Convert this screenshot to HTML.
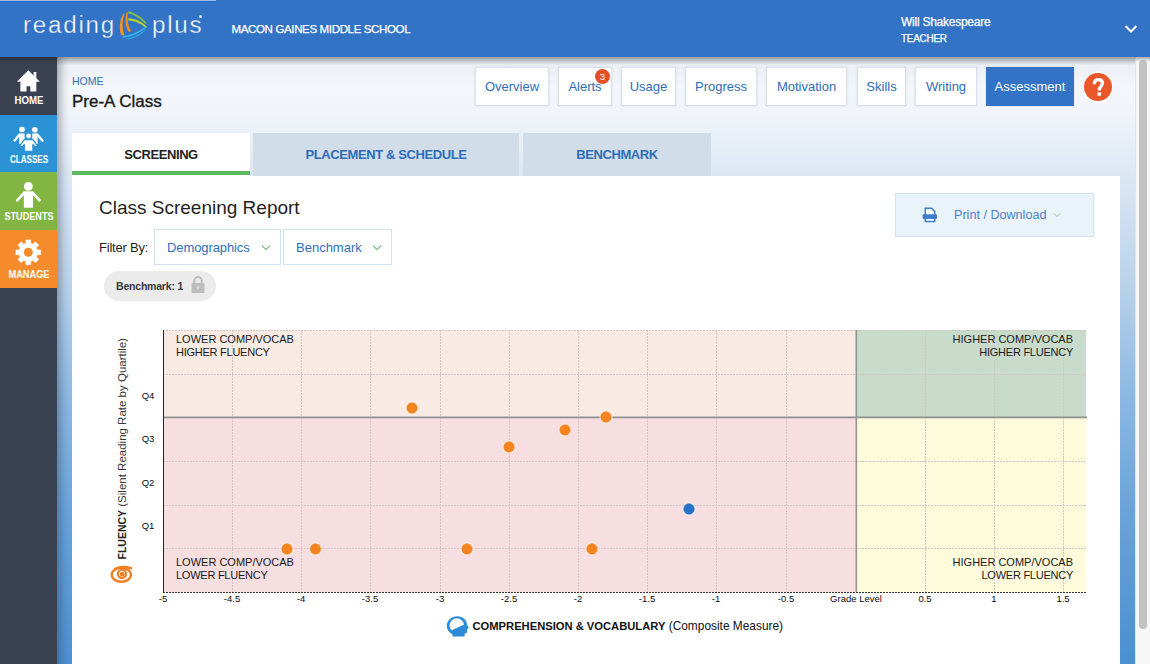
<!DOCTYPE html>
<html><head><meta charset="utf-8">
<style>
*{box-sizing:border-box;margin:0;padding:0}
html,body{width:1150px;height:664px;overflow:hidden;font-family:"Liberation Sans",sans-serif}
body{position:relative;background:#e9eef4}
.abs{position:absolute}
#bg{left:57px;top:57px;width:1093px;height:607px;background:linear-gradient(180deg,#e9edf2 0%,#f3f6fa 5%,#f1f5fa 9%,#dce7f3 19.6%,#bfd5ec 35%,#8cb8e2 56%,#6aa3d9 75%,#4a90d2 100%)}
#lshadow{left:57px;top:57px;width:12px;height:607px;background:linear-gradient(90deg,rgba(40,50,70,.33),rgba(40,50,70,.08) 60%,rgba(40,50,70,0))}
#hdr{left:0;top:0;width:1150px;height:57px;background:#3273c5}
#hdrline{left:0;top:0;width:216px;height:1px;background:#a3bde3}
#shadow{left:57px;top:57px;width:1093px;height:8px;background:linear-gradient(180deg,rgba(60,60,70,.45),rgba(60,60,70,0))}
#side{left:0;top:57px;width:57px;height:607px;background:#3a4251}
.nav{position:absolute;left:0;width:57px;height:58px;color:#fff;font-size:9.5px;text-align:center}
.nav span{position:absolute;left:0;width:57px;text-align:center}
.wt{color:#fff;white-space:nowrap}
.btn{position:absolute;top:67px;height:39px;background:#fff;border:1px solid #d9e2ec;color:#2f6db8;font-size:13px;text-align:center;line-height:37px;box-shadow:0 0 2px rgba(150,170,200,.3)}
.tab{position:absolute;top:133px;height:43px;background:#d1dde8;color:#2f6db8;font-size:13px;letter-spacing:-0.4px;font-weight:bold;text-align:center;line-height:44px}
#panel{left:72px;top:176px;width:1048px;height:488px;background:#fff}
.t{position:absolute;white-space:nowrap}
.sl{font-size:10.5px;font-weight:bold;line-height:12px;transform:translateX(-50%) scaleX(var(--sx,1));}
</style></head>
<body>
<div id="bg" class="abs"></div>
<div id="hdr" class="abs"></div>
<div id="hdrline" class="abs"></div>
<div class="abs" style="left:0;top:1px;width:216px;height:1px;background:#1e6acb"></div>
<!-- logo -->
<div class="t wt" style="left:22.5px;top:12px;font-size:22px;letter-spacing:1.6px;-webkit-text-stroke:0.35px #3273c5;transform:scale(1.1,1.05);transform-origin:0 0">reading</div>
<svg class="abs" style="left:110px;top:5px" width="50" height="40" viewBox="110 5 50 40">
  <path d="M123.4 13.5 C119.8 19 118.8 28 121 34.5 C122 36 124.5 35.8 124.3 34.2 C121.8 28 122.3 20 124.4 14 Z" fill="#f7931e"/>
  <path d="M126.6 12 C124.8 19 125 26 128.5 31.5 C129.5 32.5 131.5 31.5 130.8 30.3 C127.8 25.5 127.2 19 127.8 12.5 Z" fill="#f28a1c"/>
  <path d="M128.3 11.2 C135.5 12.5 142.5 17.5 146.8 23.5 L145 23.8 C140.5 18.5 134.5 14.5 128.3 13.4 Z" fill="#7cc242"/>
  <path d="M128.3 18.2 C135.5 18.3 143 22 147.3 27.3 L145.5 27.6 C141 23.5 135 20.6 128.3 20.4 Z" fill="#b9d530"/>
  <path d="M122.5 36.2 C131 35.5 140.5 31 146 26.2 L146.4 27.6 C141 32.5 131.5 37 123.2 37.8 Z" fill="#3bb5ea"/>
  <path d="M126.5 38.5 C134 37.6 141 33.5 145.3 29 L145.6 30.2 C141.5 34.8 134.5 38.8 127.2 39.6 Z" fill="#2fa6e0"/>
</svg>
<div class="t wt" style="left:151.5px;top:12px;font-size:22px;letter-spacing:1.6px;-webkit-text-stroke:0.35px #3273c5;transform:scale(1.1,1.05);transform-origin:0 0">plus</div>
<div class="abs" style="left:199px;top:15px;width:3px;height:3px;border-radius:50%;background:#fff;opacity:.8"></div>
<div class="t wt" style="left:231.5px;top:23.2px;font-size:11.5px;letter-spacing:-0.35px;-webkit-text-stroke:0.25px #fff">MACON GAINES MIDDLE SCHOOL</div>
<div class="t wt" style="left:901px;top:14.5px;font-size:12px;letter-spacing:-0.25px;-webkit-text-stroke:0.25px #fff">Will Shakespeare</div>
<div class="t wt" style="left:901px;top:32.5px;font-size:10px;letter-spacing:-0.3px;-webkit-text-stroke:0.25px #fff">TEACHER</div>
<svg class="abs" style="left:1124px;top:24px" width="14" height="10" viewBox="0 0 14 10"><path d="M1.5 2 L7 7.5 L12.5 2" stroke="#fff" stroke-width="2" fill="none"/></svg>

<div id="side" class="abs"></div>
<div id="shadow" class="abs"></div>
<div id="lshadow" class="abs"></div>

<!-- sidebar items -->
<div class="abs" style="left:0;top:115px;width:57px;height:57px;background:#2b93d5"></div>
<div class="abs" style="left:0;top:172px;width:57px;height:58px;background:#82b541"></div>
<div class="abs" style="left:0;top:230px;width:57px;height:58px;background:#f58b2b"></div>
<div class="abs" style="left:0;top:57px;width:57px;height:5px;background:linear-gradient(180deg,rgba(20,25,35,.45),rgba(20,25,35,0))"></div>
<svg class="abs" style="left:0;top:0" width="57" height="300" viewBox="0 0 57 300">
  <path d="M28.3 70.3 L39.9 81.8 L36.3 81.8 L36.3 91.6 L30.3 91.6 L30.3 86.2 L26.5 86.2 L26.5 91.6 L20.4 91.6 L20.4 81.8 L16.9 81.8 Z" fill="#fff"/>
  <rect x="33.6" y="72" width="2.7" height="7" fill="#fff"/>
  <g fill="#fff" stroke="#fff" stroke-linecap="round">
    <circle cx="22" cy="129.5" r="2.8" stroke="none"/>
    <circle cx="34.8" cy="129.7" r="2.8" stroke="none"/>
    <path d="M19.3 133.5 L24.6 133.5 L24.6 144 L19.3 144 Z" stroke="none"/>
    <path d="M32.2 133.5 L37.6 133.5 L37.6 144 L32.2 144 Z" stroke="none"/>
    <path d="M19.6 134.5 L14.6 140.6" stroke-width="2.3" fill="none"/>
    <path d="M37.3 134.5 L42.5 140.8" stroke-width="2.3" fill="none"/>
  </g>
  <g stroke="#2b93d5" stroke-width="1.2" fill="#fff">
    <circle cx="28.6" cy="136" r="3"/>
    <path d="M24.3 139.6 L32.9 139.6 L37.3 145.6 L35.6 147.4 L32.9 144.4 L32.9 151.4 L24.3 151.4 L24.3 144.4 L21.6 147.4 L19.9 145.6 Z" stroke-linejoin="round"/>
  </g>
  <circle cx="28.3" cy="186.4" r="4.4" fill="#fff"/>
  <path d="M23.8 191.3 L33 191.3 L33 207.7 L23.8 207.7 Z" fill="#fff"/>
  <path d="M24 193 L17.2 200.4 M32.8 193 L39.6 200.4" stroke="#fff" stroke-width="2.6" stroke-linecap="round"/>
  <path d="M25.89 243.32 L25.90 239.93 L30.70 239.93 L30.71 243.32 L32.95 244.25 L35.35 241.85 L38.75 245.25 L36.35 247.65 L37.28 249.89 L40.67 249.90 L40.67 254.70 L37.28 254.71 L36.35 256.95 L38.75 259.35 L35.35 262.75 L32.95 260.35 L30.71 261.28 L30.70 264.67 L25.90 264.67 L25.89 261.28 L23.65 260.35 L21.25 262.75 L17.85 259.35 L20.25 256.95 L19.32 254.71 L15.93 254.70 L15.93 249.90 L19.32 249.89 L20.25 247.65 L17.85 245.25 L21.25 241.85 L23.65 244.25 Z" fill="#fff" stroke="#fff" stroke-width="0.6" stroke-linejoin="round"/>
  <circle cx="28.3" cy="252.3" r="4.5" fill="#f58b2b"/>
</svg>
<div class="t wt sl" id="lh" style="left:28.5px;top:94px;--sx:.92">HOME</div>
<div class="t wt sl" id="lc" style="left:28.5px;top:153px;--sx:.77">CLASSES</div>
<div class="t wt sl" id="ls" style="left:28.5px;top:209.5px;--sx:.87">STUDENTS</div>
<div class="t wt sl" id="lm" style="left:28.5px;top:267.5px;--sx:.88">MANAGE</div>
<!-- breadcrumb -->
<div class="t" style="left:72px;top:75px;font-size:10.5px;color:#2f6db8">HOME</div>
<div class="t" style="left:72px;top:92px;font-size:17px;color:#1a1a1a;-webkit-text-stroke:0.35px #1a1a1a">Pre-A Class</div>

<!-- nav buttons -->
<div class="btn" style="left:475px;width:74px">Overview</div>
<div class="btn" style="left:558px;width:54px">Alerts</div>
<div class="btn" style="left:621px;width:55px">Usage</div>
<div class="btn" style="left:685px;width:72px">Progress</div>
<div class="btn" style="left:766px;width:81px">Motivation</div>
<div class="btn" style="left:857px;width:49px">Skills</div>
<div class="btn" style="left:915px;width:62px">Writing</div>
<div class="btn" style="left:986px;width:88px;background:#3273c5;border-color:#3273c5;color:#fff">Assessment</div>
<div class="abs" style="left:595px;top:69px;width:15px;height:15px;border-radius:50%;background:#e2512a;color:#fff;font-size:9.5px;text-align:center;line-height:15px">3</div>
<div class="abs" style="left:1084px;top:73px;width:28px;height:28px;border-radius:50%;background:#e9572b;box-shadow:0 0 0 1.5px rgba(255,255,255,.8)"></div>
<svg class="abs" style="left:1084px;top:73px" width="28" height="28" viewBox="1084 73 28 28"><path d="M1094.3 84.2 C1094.3 80.8 1096.2 79.6 1098.4 79.6 C1100.9 79.6 1102.4 81.2 1102.4 83.3 C1102.4 86.2 1099.3 86.6 1099.3 89.9 L1099.3 90.6" stroke="#fff" stroke-width="3.4" fill="none"/><rect x="1097.5" y="92.3" width="3.6" height="3.4" fill="#fff"/></svg>

<!-- tabs -->
<div class="tab" style="left:72px;width:178px;background:#fff;color:#222">SCREENING</div>
<div class="abs" style="left:72px;top:171px;width:178px;height:4px;background:#5cb85c"></div>
<div class="tab" style="left:253px;width:266px">PLACEMENT &amp; SCHEDULE</div>
<div class="tab" style="left:523px;width:188px">BENCHMARK</div>

<div id="panel" class="abs"></div>


<!-- report header -->
<div class="t" style="left:99px;top:197px;font-size:19px;color:#1e1e1e">Class Screening Report</div>
<div class="abs" style="left:895px;top:193px;width:199px;height:44px;background:#eaf2fa;border:1px solid #d3e2f1"></div>
<svg class="abs" style="left:915px;top:200px" width="30" height="30" viewBox="915 200 30 30">
  <path d="M925.3 215 V208.3 H931.5 L934.7 211.4 V215" fill="#fff" stroke="#3d7dd0" stroke-width="1.5"/>
  <rect x="922.6" y="214.3" width="14.4" height="4.8" rx="1" fill="#3d7dd0"/>
  <rect x="925.3" y="218.2" width="9.4" height="3.3" fill="#fff" stroke="#3d7dd0" stroke-width="1.5"/>
</svg>
<div class="t" style="left:954px;top:208px;font-size:12.6px;color:#4a82c9">Print / Download</div>
<svg class="abs" style="left:1053px;top:212px" width="8" height="6" viewBox="0 0 8 6"><path d="M1 1.5 L4 4.5 L7 1.5" stroke="#9ccc9c" stroke-width="1" fill="none"/></svg>

<div class="t" style="left:99px;top:240px;font-size:13px;letter-spacing:-0.2px;color:#1e1e1e">Filter By:</div>
<div class="abs" style="left:154px;top:229px;width:127px;height:36px;border:1px solid #d3e2f3;background:#fff"></div>
<div class="t" style="left:167px;top:240px;font-size:13px;letter-spacing:-0.1px;color:#2f6fc0">Demographics</div>
<svg class="abs" style="left:261px;top:244px" width="10" height="7" viewBox="0 0 10 7"><path d="M1 1.5 L5 5.5 L9 1.5" stroke="#86c590" stroke-width="1.3" fill="none"/></svg>
<div class="abs" style="left:283px;top:229px;width:109px;height:36px;border:1px solid #d3e2f3;background:#fff"></div>
<div class="t" style="left:296px;top:240px;font-size:13px;color:#2f6fc0">Benchmark</div>
<svg class="abs" style="left:372px;top:244px" width="10" height="7" viewBox="0 0 10 7"><path d="M1 1.5 L5 5.5 L9 1.5" stroke="#86c590" stroke-width="1.3" fill="none"/></svg>

<div class="abs" style="left:104px;top:271px;width:112px;height:30px;border-radius:15px;background:#ebebeb"></div>
<div class="t" style="left:116px;top:280px;font-size:10.5px;letter-spacing:-0.2px;font-weight:bold;color:#383838">Benchmark: 1</div>
<svg class="abs" style="left:191px;top:276px" width="14" height="17" viewBox="0 0 14 17">
  <path d="M3.3 7 L3.3 4.8 A3.7 3.7 0 0 1 10.7 4.8 L10.7 7" fill="none" stroke="#bdbdbd" stroke-width="2"/>
  <rect x="0.5" y="7" width="13" height="10" rx="1" fill="#bdbdbd"/>
  <circle cx="7" cy="11.5" r="1.3" fill="#e6e6e6"/>
</svg>

<!-- chart -->
<svg class="abs" style="left:0;top:0" width="1150" height="664" viewBox="0 0 1150 664">
  <rect x="163" y="330" width="693" height="87" fill="#f8ebe4"/>
  <rect x="163" y="417" width="693" height="175" fill="#f7dee0"/>
  <rect x="856" y="330" width="230" height="87" fill="#c9dccb"/>
  <rect x="856" y="417" width="230" height="175" fill="#fefbdc"/>
  <g stroke="#d3c6c6" stroke-width="1" stroke-dasharray="2,1" fill="none">
    <path d="M163 330.5 H1086 M163 374.5 H1086 M163 461.5 H1086 M163 505.5 H1086 M163 548.5 H1086"/>
    <path d="M232.5 330 V592 M301.5 330 V592 M370.5 330 V592 M440.5 330 V592 M509.5 330 V592 M578.5 330 V592 M647.5 330 V592 M716.5 330 V592 M786.5 330 V592 M925.5 330 V592 M994.5 330 V592 M1063.5 330 V592"/>
  </g>
  <path d="M163 417.4 H1087" stroke="#8f8f8f" stroke-width="1.7"/>
  <path d="M856.3 330 V592" stroke="#929292" stroke-width="1.6"/>
  <path d="M163.5 330 V593" stroke="#222" stroke-width="1"/>
  <path d="M163 592.5 H1087" stroke="#333" stroke-width="1" stroke-dasharray="2,1"/>
  <g fill="#f4841f" stroke="rgba(255,255,255,.6)" stroke-width="1.2">
    <circle cx="412" cy="408" r="6"/><circle cx="606" cy="417" r="6"/><circle cx="565" cy="430" r="6"/><circle cx="509" cy="447" r="6"/>
    <circle cx="287" cy="549" r="6"/><circle cx="315.5" cy="549" r="6"/><circle cx="467" cy="549" r="6"/><circle cx="592" cy="549" r="6"/>
  </g>
  <circle cx="689" cy="509" r="6" fill="#2a72c8" stroke="rgba(255,255,255,.6)" stroke-width="1.2"/>
  <g font-family="Liberation Sans" font-size="9.5" fill="#0a0a0a" text-anchor="middle">
    <text x="163" y="602">-5</text><text x="232" y="602">-4.5</text><text x="301" y="602">-4</text><text x="370" y="602">-3.5</text>
    <text x="440" y="602">-3</text><text x="509" y="602">-2.5</text><text x="578" y="602">-2</text><text x="647" y="602">-1.5</text>
    <text x="716" y="602">-1</text><text x="786" y="602">-0.5</text><text x="856" y="602">Grade Level</text><text x="925" y="602">0.5</text>
    <text x="994" y="602">1</text><text x="1063" y="602">1.5</text>
    <text x="148" y="399">Q4</text><text x="148" y="442">Q3</text><text x="148" y="486">Q2</text><text x="148" y="529">Q1</text>
  </g>
  <g font-family="Liberation Sans" font-size="11" fill="#1a1a1a">
    <text x="176" y="343">LOWER COMP/VOCAB</text><text x="176" y="356" letter-spacing="-0.25">HIGHER FLUENCY</text>
    <text x="176" y="566">LOWER COMP/VOCAB</text><text x="176" y="579" letter-spacing="-0.25">LOWER FLUENCY</text>
    <text x="1073" y="343" text-anchor="end">HIGHER COMP/VOCAB</text><text x="1073" y="356" text-anchor="end" letter-spacing="-0.25">HIGHER FLUENCY</text>
    <text x="1073" y="566" text-anchor="end">HIGHER COMP/VOCAB</text><text x="1073" y="579" text-anchor="end" letter-spacing="-0.25">LOWER FLUENCY</text>
  </g>
  <text transform="translate(125.5,559.5) rotate(-90)" font-family="Liberation Sans" font-size="11.5" fill="#3a3a3a"><tspan font-weight="bold" font-size="10.5" fill="#222">FLUENCY</tspan> (Silent Reading Rate by Quartile)</text>
  <g fill="none" stroke="#f27c1b" stroke-linecap="round">
    <ellipse cx="121.3" cy="574.8" rx="9.6" ry="7" stroke-width="2.3"/>
    <path d="M115 568.8 C120 566.5 126 566.6 131.2 568.3" stroke-width="2.2"/>
    <circle cx="122" cy="573.8" r="4.1" stroke-width="2.1"/>
    <circle cx="122.2" cy="574.2" r="2.4" fill="#f27c1b" stroke="none"/>
  </g>
  <defs><clipPath id="capclip"><path d="M440 610 L475 610 L475 619.5 L447 632.5 L440 632.5 Z"/></clipPath></defs>
  <path d="M457.3 616.3 C463 616.3 466.8 620 467 624.5 L468.8 628 L467.2 629 L467.2 631.5 C467.2 633 466 633.6 464.6 633.6 L464.6 636.6 L452.5 636.6 L452.5 634.2 C449 632.5 446.8 629.5 446.8 626 C446.8 620.6 451.5 616.3 457.3 616.3 Z" fill="#2b8bd6"/>
  <circle cx="456.8" cy="625.6" r="7.3" fill="#fff" clip-path="url(#capclip)"/>
  <text x="472.5" y="630" font-family="Liberation Sans" font-size="11.9" fill="#111"><tspan font-weight="bold" font-size="11.2">COMPREHENSION &amp; VOCABULARY</tspan> (Composite Measure)</text>
</svg>

<!-- scrollbar -->
<div class="abs" style="left:1135px;top:57px;width:15px;height:607px;background:#f7f7f7;border-left:1px solid #e4e4e4"></div>
<div class="abs" style="left:1139px;top:60px;width:8px;height:569px;border-radius:4px;background:#c2c2c2"></div>
<div class="abs" style="left:1135px;top:57px;width:15px;height:5px;background:linear-gradient(180deg,rgba(60,60,70,.4),rgba(60,60,70,0))"></div>

</body></html>
